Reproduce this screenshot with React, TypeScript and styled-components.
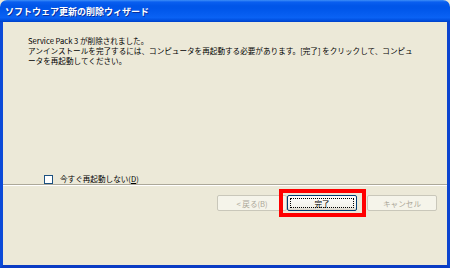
import styled, { createGlobalStyle } from "styled-components"

const GlobalStyle = createGlobalStyle`
	html, body {
		margin: 0;
		padding: 0;
		width: 450px;
		height: 268px;
		overflow: hidden;
		background: #ece9d8;
	}
`

const uiFont = `"MS UI Gothic", "Noto Sans CJK JP", "Liberation Sans", sans-serif`

const Window = styled.div`
	width: 450px;
	height: 268px;
	display: flex;
	flex-direction: column;
	font-family: ${uiFont};
	box-sizing: border-box;
`

const TitleBar = styled.div`
	height: 22px;
	flex: none;
	display: flex;
	align-items: center;
	padding-left: 5px;
	border-radius: 7px 7px 0 0;
	background: linear-gradient(
		#3d8ef7 0,
		#0a5ff0 2px,
		#0055e8 6px,
		#0056ea 40%,
		#0a62f4 80%,
		#0050e0 92%,
		#0040c8 100%
	);
`

const Title = styled.span`
	color: #fff;
	font-size: 9px;
	font-weight: bold;
	letter-spacing: 0;
	text-shadow: 1px 1px 0 #0a2f9c;
`

const Body = styled.div`
	flex: 1;
	display: flex;
	flex-direction: column;
	background: #ece9d8;
	border-left: 3px solid #0b4ad8;
	border-right: 3px solid #0b44cf;
	border-bottom: 3px solid #0a3cc4;
`

const Content = styled.div`
	flex: 1;
	padding: 14px 0 0 25px;
	font-size: 7.6px;
	line-height: 10px;
	color: #000;
`

const Line = styled.div`
	white-space: nowrap;
`

const CheckRow = styled.label`
	display: flex;
	align-items: center;
	gap: 7px;
	margin: 108px 0 0 16px;
	height: 10px;
`

const CheckBox = styled.span`
	width: 7px;
	height: 7px;
	background: #fff;
	border: 1px solid #1c5180;
`

const Separator = styled.div`
	height: 1px;
	background: #aca899;
	border-bottom: 1px solid #fff;
`

const ButtonRow = styled.div`
	display: flex;
	justify-content: flex-end;
	align-items: flex-start;
	gap: 10px;
	padding: 9px 10px 0 0;
	flex: 1;
`

const ButtonGroup = styled.div`
	display: flex;
`

const Button = styled.button`
	width: 70px;
	height: 16px;
	padding: 0;
	box-sizing: border-box;
	font-family: ${uiFont};
	font-size: 7.6px;
	color: #000;
	border: 1px solid #003c74;
	border-radius: 2px;
	background: linear-gradient(#fefefd, #f2f1ea 80%, #d6d0c5);
	display: flex;
	align-items: center;
	justify-content: center;

	&:disabled {
		color: #aca899;
		border-color: #c9c7ba;
		background: #f5f4ea;
	}
`

const FocusRing = styled.span`
	width: 62px;
	height: 8px;
	border: 1px dotted #000;
	display: flex;
	align-items: center;
	justify-content: center;
`

const Highlight = styled.span`
	position: relative;
	display: flex;

	&::after {
		content: "";
		position: absolute;
		top: -6px;
		bottom: -6px;
		left: -8px;
		right: -9px;
		border: 4px solid #ff0000;
		pointer-events: none;
	}
`

const App = () => (
	<>
		<GlobalStyle />
		<Window>
			<TitleBar>
				<Title>ソフトウェア更新の削除ウィザード</Title>
			</TitleBar>
			<Body>
				<Content>
					<Line>Service Pack 3 が削除されました。</Line>
					<Line>
						アンインストールを完了するには、コンピュータを再起動する必要があります。[完了]
						をクリックして、コンピュ
					</Line>
					<Line>ータを再起動してください。</Line>
					<CheckRow>
						<CheckBox />
						<span>
							今すぐ再起動しない(<u>D</u>)
						</span>
					</CheckRow>
				</Content>
				<Separator />
				<ButtonRow>
					<ButtonGroup>
						<Button disabled>&lt; 戻る(B)</Button>
						<Highlight>
							<Button>
								<FocusRing>完了</FocusRing>
							</Button>
						</Highlight>
					</ButtonGroup>
					<Button disabled>キャンセル</Button>
				</ButtonRow>
			</Body>
		</Window>
	</>
)

export default App
